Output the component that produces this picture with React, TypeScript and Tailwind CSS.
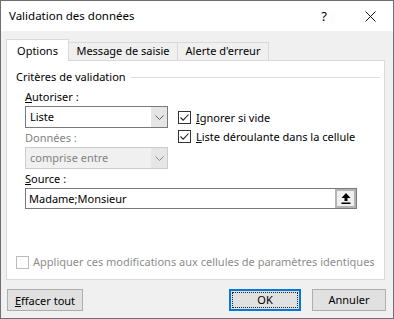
import React from 'react';

const font = { fontFamily: '"Noto Sans", "Open Sans", sans-serif' };

function Chevron({ color = '#606060' }: { color?: string }) {
  return (
    <svg width="9" height="5" viewBox="0 0 9 5">
      <path d="M0.5 0.5 L4.5 4.5 L8.5 0.5" fill="none" stroke={color} strokeWidth="1" />
    </svg>
  );
}

function Check() {
  return (
    <span className="flex h-[13px] w-[13px] items-center justify-center border border-[#333] bg-white">
      <svg width="11" height="11" viewBox="0 0 11 11">
        <path d="M1.5 5.5 L4.2 8.2 L9.5 2.5" fill="none" stroke="#222" strokeWidth="1.1" />
      </svg>
    </span>
  );
}

function Select({ value, disabled }: { value: string; disabled?: boolean }) {
  return (
    <div
      className={`flex h-[22px] w-[143px] items-stretch border ${
        disabled ? 'border-[#cccccc] bg-[#f0f0f0] text-[#838383]' : 'border-[#7a7a7a] bg-white text-black'
      }`}
    >
      <span className="flex flex-1 items-center pl-[4px]">{value}</span>
      <span
        className={`flex w-[16px] items-center justify-center ${
          disabled ? 'bg-[#e6e6e6]' : 'bg-[#e5e5e5]'
        }`}
      >
        <Chevron color={disabled ? '#8a8a8a' : '#606060'} />
      </span>
    </div>
  );
}

export default function App() {
  return (
    <div
      className="flex h-[319px] w-[394px] flex-col border border-[#6f6f6f] bg-[#f0f0f0] text-[11px] leading-[16px] text-black"
      style={font}
    >
      {/* title bar */}
      <div className="flex h-[30px] items-center bg-white pl-[8px]">
        <span className="flex-1 text-[11.5px]">Validation des données</span>
        <span className="w-[46px] text-center text-[13px]">?</span>
        <span className="flex w-[46px] items-center justify-center">
          <svg width="11" height="11" viewBox="0 0 11 11">
            <path d="M0.5 0.5 L10.5 10.5 M10.5 0.5 L0.5 10.5" stroke="#111" strokeWidth="1" />
          </svg>
        </span>
      </div>

      <div className="flex flex-1 flex-col px-[5px] pt-[8px]">
        {/* tabs */}
        <div className="relative z-10 -mb-px flex items-end">
          <div className="flex h-[22px] w-[63px] items-center justify-center border border-b-0 border-[#d9d9d9] bg-white">
            Options
          </div>
          <div className="flex h-[19px] w-[109px] items-center justify-center border border-l-0 border-[#d9d9d9] pb-px">
            Message de saisie
          </div>
          <div className="flex h-[19px] w-[91px] items-center justify-center border border-l-0 border-[#d9d9d9] pb-px">
            Alerte d'erreur
          </div>
        </div>

        {/* panel */}
        <div className="flex h-[220px] w-[379px] flex-col border border-[#d9d9d9] bg-white pt-[8px]">
          <div className="flex items-center pl-[9px] pr-[4px]">
            <span>Critères de validation</span>
            <span className="ml-[5px] h-px flex-1 bg-[#dcdcdc]" />
          </div>

          <div className="mt-[4px] flex flex-col pl-[18px]">
            <span>
              <span className="underline">A</span>utoriser :
            </span>
            <div className="mt-px flex gap-[10px]">
              <div className="flex flex-col">
                <Select value="Liste" />
                <span className="mt-[2px] text-[#838383]">Données :</span>
                <div className="mt-px">
                  <Select value="comprise entre" disabled />
                </div>
              </div>
              <div className="flex flex-col pt-[2px]">
                <div className="flex h-[19px] items-center gap-[5px]">
                  <Check />
                  <span>
                    <span className="underline">I</span>gnorer si vide
                  </span>
                </div>
                <div className="flex h-[19px] items-center gap-[5px]">
                  <Check />
                  <span>
                    <span className="underline">L</span>iste déroulante dans la cellule
                  </span>
                </div>
              </div>
            </div>
            <span className="mt-[2px]">
              <span className="underline">S</span>ource :
            </span>
            <div className="mt-px flex h-[21px] w-[332px] items-stretch border border-[#7a7a7a] bg-white">
              <span className="flex flex-1 items-center pl-[3px]">Madame;Monsieur</span>
              <span className="flex w-[21px] items-center justify-center border-2 border-[#b4b4b4] bg-[#f0f0f0]">
                <svg width="10" height="11" viewBox="0 0 10 11">
                  <path d="M5 0 L9.5 5 H6.5 V8 H3.5 V5 H0.5 Z" fill="#000" />
                  <rect x="0.5" y="9.5" width="9" height="1.5" fill="#000" />
                </svg>
              </span>
            </div>
          </div>

          <div className="mt-auto mb-[9px] flex items-center gap-[4px] pl-[9px] text-[#8c8c8c]">
            <span className="h-[13px] w-[13px] border border-[#bcbcbc] bg-white" />
            <span className="whitespace-nowrap">Appliquer ces modifications aux cellules de paramètres identiques</span>
          </div>
        </div>

        {/* buttons */}
        <div className="mt-[9px] mr-[2px] ml-px flex items-center">
          <button className="h-[22px] w-[76px] border border-[#adadad] bg-[#e1e1e1] pt-px">
            <span className="underline">E</span>ffacer tout
          </button>
          <span className="flex-1" />
          <button className="flex h-[22px] w-[72px] items-center justify-center border-2 border-[#0078d7] bg-[#e1e1e1] p-px">
            <span className="flex h-full w-full items-center justify-center border border-dotted border-[#222]">OK</span>
          </button>
          <button className="ml-[11px] h-[22px] w-[74px] border border-[#adadad] bg-[#e1e1e1]">
            Annuler
          </button>
        </div>
      </div>
    </div>
  );
}
